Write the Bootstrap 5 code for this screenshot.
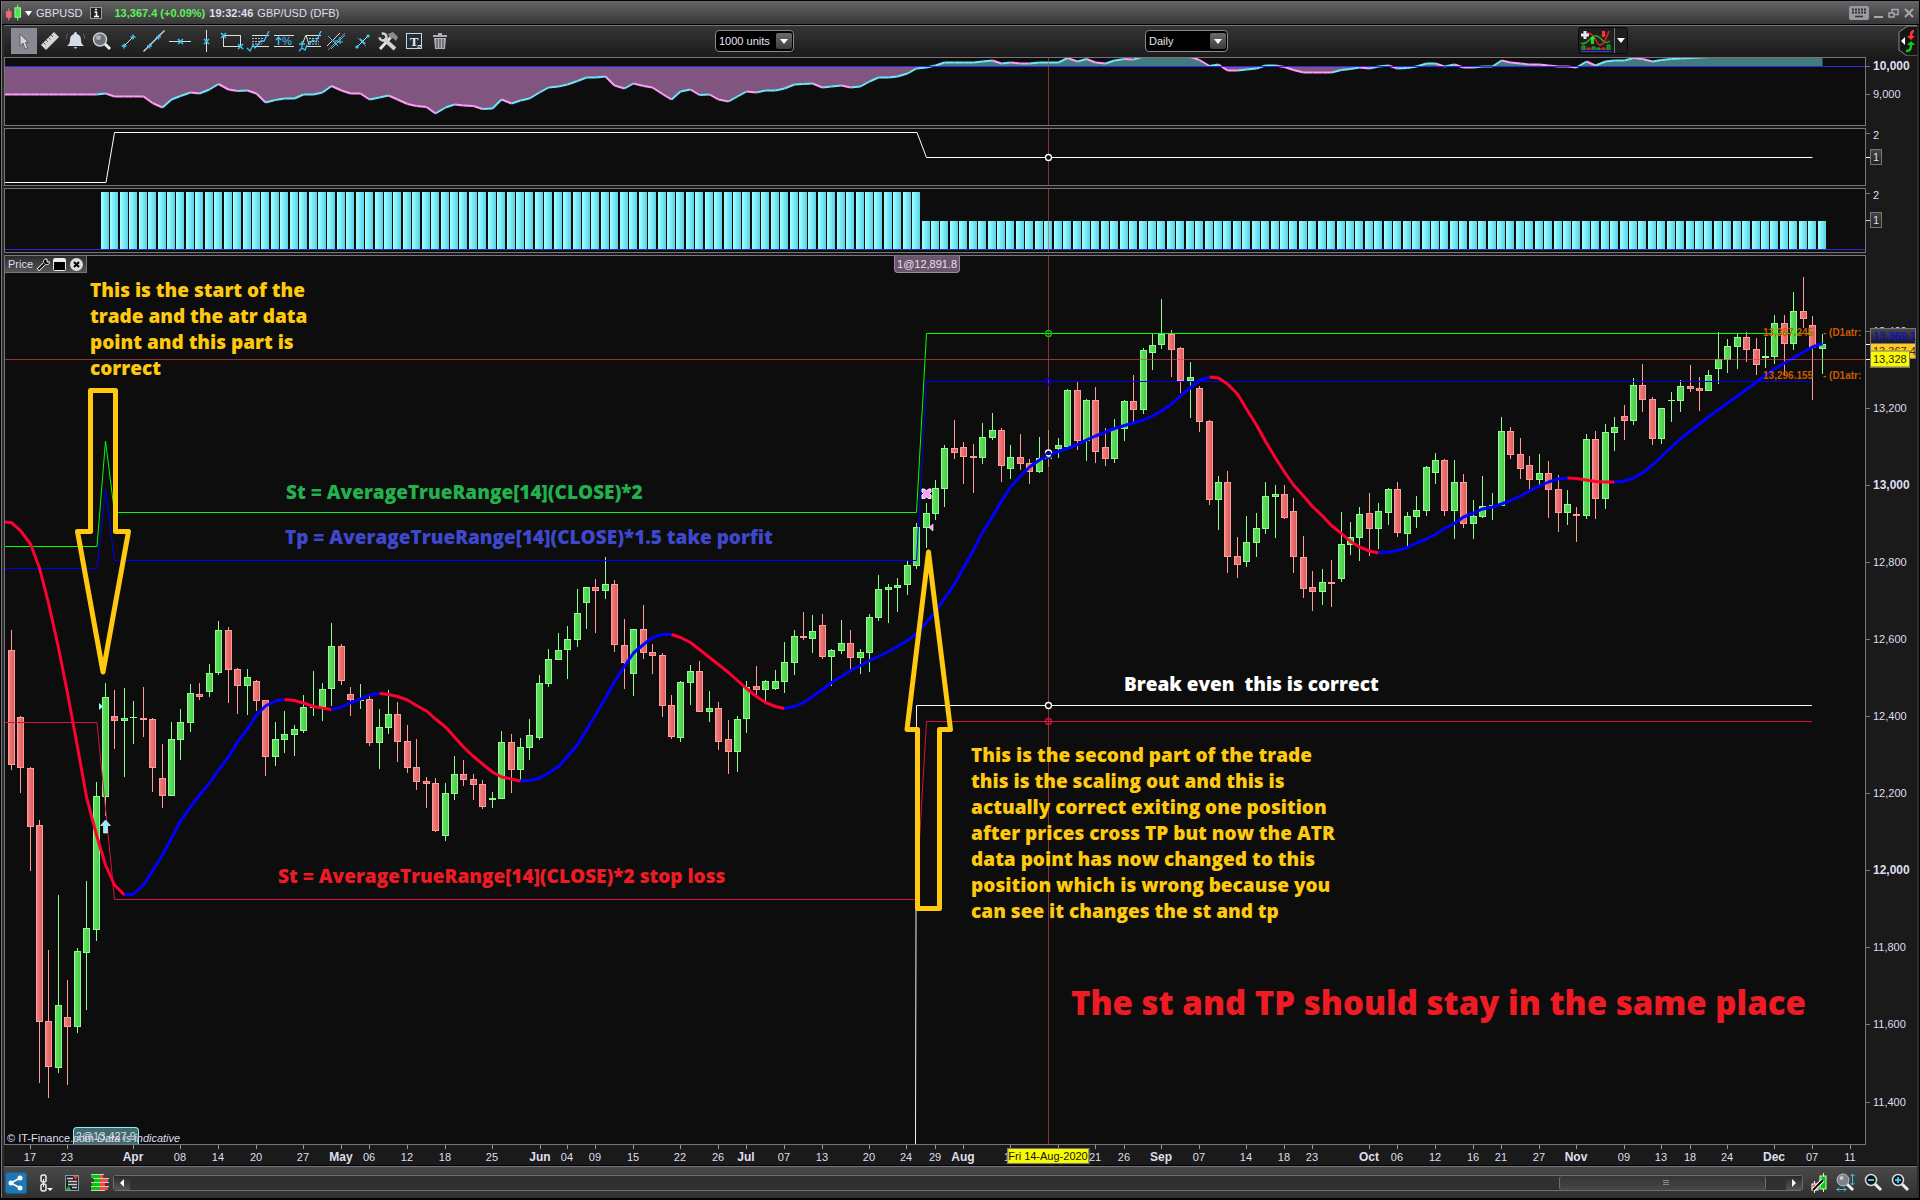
<!DOCTYPE html>
<html lang="en">
<head>
<meta charset="utf-8">
<meta name="viewport" content="width=device-width, initial-scale=1">
<title>GBPUSD</title>
<link href="https://cdn.jsdelivr.net/npm/bootstrap@5.3.0/dist/css/bootstrap.min.css" rel="stylesheet">
<script src="https://cdn.jsdelivr.net/npm/bootstrap@5.3.0/dist/js/bootstrap.bundle.min.js"></script>
<style>
:root{--line:#77757b;--txt:#dfdfee;--plot:#0d0d0d;--chrome:#1a1a1a;--note:#fec90e}
body{background:#000;color:var(--txt);font-family:"Liberation Sans",Arial,sans-serif;font-size:11px;line-height:14px;overflow:hidden}
svg{display:block}
.frame{border-left:1px solid var(--line);background:#2d2d2d;margin:1px 1px 2px}
.titlebar{height:24px;border-top:1px solid #6a686e;border-bottom:1px solid #000;background:linear-gradient(#636363,#373737)}
.titlebar button,.tool,.flat{background:none;border:0;padding:0;color:inherit}
.up{color:#5cf25c}
.body-area{margin:0 2px;border-top:1px solid var(--line);background:var(--chrome)}
.toolbar{height:31px;padding:0 0 2px 7px;background:linear-gradient(#353535,#1b1b1b)}
.tool{width:26px;height:26px}
.tool.on{background:#8a8890}
.grow-a{flex:262 1 0}.grow-b{flex:351 1 0}.grow-c{flex:350 1 0}.grow-d{flex:270 1 0}
.pick{position:relative;width:79px;height:22px}
.pick-wide{width:83px}
.pick select{appearance:none;width:100%;height:100%;background:#000;color:#e4e4f2;border:1px solid #8a8890;border-radius:4px;padding:0 18px 0 3px;font-size:11px}
.pick i{position:absolute;right:2px;top:3px;width:16px;height:16px;border-radius:2px;background:linear-gradient(#6a6a6a,#3c3c3c);pointer-events:none}
.pick i::after{content:"";position:absolute;left:4px;top:6px;border:4px solid transparent;border-top:5px solid #fff;border-bottom:0}
.indic{height:27px;border:1px solid #0a0a0a;border-radius:3px;background:#1e1e1e}
.panel-row{margin-bottom:2px}
.plot{position:relative;border:1px solid var(--line);background:var(--plot);overflow:hidden;min-width:0}
.plot>svg{position:absolute;left:0;top:0;width:100%;height:100%}
.axis{position:relative;width:51px;flex:none}
.h-a{height:69px}.h-b{height:58px}.h-c{height:65px}
.axis span,.axis b{position:absolute;left:7px;transform:translateY(-50%);white-space:nowrap}
.axis b{font-size:12px}
.axis em{position:absolute;left:0;width:4px;height:1px;background:var(--line)}
.axis em.lit{background:#fff}.axis em.aqua{background:#7ff0ff}
.axis .chip{left:4px;border:1px solid #77757b;padding:0 2px;background:linear-gradient(#444,#222)}
.axis .chip-blue{color:#0000f5;width:46px;height:16px;background:linear-gradient(#484848,#1c1c1c)}
.axis .chip-gold{color:#3c3200;width:46px;height:16px;background:#ffc926}
.axis .chip-yel{color:#222;background:#fafa00;height:17px}
.times{position:relative;height:21px;margin-right:51px}
.times span,.times b{position:absolute;top:5px;transform:translateX(-50%);white-space:nowrap}
.times b{font-size:12px}
.times em{position:absolute;top:0;width:1px;height:4px;background:#9a98a0}
.times .today{top:3px;color:#111;background:#fafa00;border:1px solid #77757b}
.note-text{position:absolute;margin:0;font-family:"Open Sans",sans-serif;font-weight:800;font-size:19px;line-height:26px;color:var(--note);white-space:pre}
.n1{left:4.57%;top:2.36%}
.n2{left:15.11%;top:25.1%;color:#22b14c}
.n3{left:15.05%;top:30.2%;color:#3f48cc}
.n4{left:14.68%;top:68.36%;color:#ed1c24}
.n5{left:60.16%;top:46.73%;color:#fff}
.n6{left:51.94%;top:54.73%}
.n7{left:57.31%;top:81.7%;color:#ed1c24;font-size:33px;line-height:44px}
.lvl{position:absolute;font-weight:700;font-size:10px;color:#c85a00;line-height:12px;white-space:nowrap}
.lvl-x{left:94.52%}.lvl-d{left:97.74%}
.lvl-1{top:8%}.lvl-2{top:12.8%}
.tag-top{position:absolute;left:47.8%;top:0;width:66px;height:17px;line-height:16px;text-align:center;background:#6b556b;border:1px solid #a284a6;border-top:0;border-radius:0 0 4px 4px;color:#e8e0f0}
.tag-bot{position:absolute;left:3.65%;bottom:0;width:66px;height:17px;text-align:center;background:#456a6d;border:1px solid #7ff0ff;border-bottom:0;border-radius:4px 4px 0 0;line-height:17px;color:#cfdbe8}
.credit{position:absolute;left:2px;bottom:-1px}
.panel-tab{position:absolute;left:0;top:0;height:17px;width:82px;padding:0 3px;border:solid #77757b;border-width:0 1px 1px 0;background:linear-gradient(#2c2c2c,#555)}
.statusbar{height:32px;margin:0 2px;padding:0 7px 0 1px;border-top:1px solid var(--line);background:linear-gradient(#484848,#303030);box-shadow:0 -1px 0 #000}
.share{width:22px;height:22px;border-radius:3px;background:#1d78b4;border:1px solid #16619a;padding:0}
.track{height:16px;border:1px solid #6e6c72;background:#303030;border-radius:3px}
.track button{width:16px;border:0;padding:0;background:linear-gradient(#2a2a2a,#555)}
.thumb{position:absolute;left:86.3%;width:12.5%;top:0;bottom:0;border:1px solid #6e6c72;border-width:0 1px;border-radius:3px;background:linear-gradient(#353535,#474747)}
.thumb::after{content:"";position:absolute;left:50%;top:4px;width:6px;height:6px;background:repeating-linear-gradient(#8a8890 0 1px,transparent 1px 2px)}
</style>
</head>
<body>
<div class="vh-100 d-flex flex-column">
<div class="frame flex-fill d-flex flex-column">

<header class="titlebar d-flex align-items-center pe-1">
  <svg class="ms-1" width="15" height="18" viewBox="0 0 16 18"><path d="M3 4v13" stroke="#ff8a8a"/><path d="M12.500 0v17" stroke="#8f8"/><rect x="0" y="7" width="6" height="7" fill="#f06a6a"/><rect x="9.500" y="3.500" width="6" height="10" fill="#4ee04e" stroke="#9f9"/></svg>
  <button class="ms-1" aria-label="Symbol list"><svg width="7" height="5"><path d="M0 0h7L3.500 5z" fill="#fff"/></svg></button>
  <span class="ms-1">GBPUSD</span>
  <button class="ms-2" aria-label="Information"><svg width="12" height="12"><rect x=".5" y=".5" width="11" height="11" fill="#222" stroke="#99a"/><path d="M4.500 5h2v4M4 9.500h5M5 2.500h2" stroke="#fff" stroke-width="1.500" fill="none"/></svg></button>
  <b class="up ms-2 ps-1">13,367.4 (+0.09%)</b>
  <b class="ms-1">19:32:46</b>
  <span class="ms-1">GBP/USD (DFB)</span>
  <button class="ms-auto" aria-label="Keyboard"><svg width="20" height="14"><rect width="20" height="14" rx="2" fill="#9a98a2"/><path d="M3 3.500h14M3 6.500h14" stroke="#333" stroke-width="2" stroke-dasharray="2 1"/><path d="M6 10.500h8" stroke="#333" stroke-width="1.500"/></svg></button>
  <button class="ms-1" aria-label="Minimise"><svg width="11" height="12"><path d="M1 10h9" stroke="#a9a7b2" stroke-width="2"/></svg></button>
  <button class="ms-1" aria-label="Restore"><svg width="11" height="11" fill="none" stroke="#a9a7b2" stroke-width="1.500"><path d="M4 4V1.500h6v5H7"/><rect x="1" y="5" width="5" height="4"/></svg></button>
  <button class="ms-1" aria-label="Close"><svg width="12" height="12"><path d="M2 2l8 8M10 2l-8 8" stroke="#a9a7b2" stroke-width="2"/></svg></button>
</header>

<main class="body-area flex-fill d-flex flex-column">
  <div class="toolbar d-flex align-items-center">
    <div class="d-flex" id="tools">
      <button class="tool on" aria-label="Select"><svg width="26" height="26"><path d="M9 6v12l3-3 2 6 2.500-1-2-5.500h3z" fill="#d4d4d8" stroke="#444" stroke-width=".7"/></svg></button>
      <button class="tool" aria-label="Ruler"><svg width="26" height="26"><path d="M4 17L17 4l5 5L9 22z" fill="#d6d6da"/><path d="M6.500 14.500l2 2M9 12l2 2M11.500 9.500l2 2M14 7l2 2" stroke="#555"/></svg></button>
      <button class="tool" aria-label="Alert"><svg width="26" height="26"><path d="M12.500 4c1 0 1.500 1 1.500 2 3 1 4 3 4 6 0 3 1 4 3 6H4c2-2 3-3 3-6s1-5 4-6c0-1 .5-2 1.500-2z" fill="#d4dde6"/><path d="M10.500 19h4l-2 2z" fill="#a8c4d8"/><path d="M5 6c-1.500 1-2 3-1.500 5M20 6c1.500 1 2 3 1.500 5" stroke="#7f96a8" stroke-dasharray="1 1" fill="none"/></svg></button>
      <button class="tool" aria-label="Zoom"><svg width="26" height="26"><path d="M15 15l6 6" stroke="#eee" stroke-width="3"/><circle cx="11" cy="11.500" r="6.500" fill="#6d7277" stroke="#c9ccd0" stroke-width="1.500"/><circle cx="9.500" cy="9.500" r="2.500" fill="#aab0b6"/></svg></button>
      <button class="tool" aria-label="Segment"><svg width="26" height="26" fill="none"><path d="M9 18l9-9" stroke="#ddd"/><path d="M9 15.500v5M6.500 18h5M18 6.500v5M15.500 9h5" stroke="#3bc4f5" stroke-width="1.500"/></svg></button>
      <button class="tool" aria-label="Line"><svg width="26" height="26" fill="none"><path d="M2.500 23.500l21-21" stroke="#ddd" stroke-width="1.300"/><path d="M8.500 15.500v5M6 18h5M17.500 6.500v5M15 9h5" stroke="#3bc4f5" stroke-width="1.300"/></svg></button>
      <button class="tool" aria-label="Horizontal line"><svg width="26" height="26" fill="none"><path d="M2 13.500h22" stroke="#ddd"/><path d="M11 11l5 5M16 11l-5 5" stroke="#3bc4f5" stroke-width="1.500"/></svg></button>
      <button class="tool" aria-label="Vertical line"><svg width="26" height="26" fill="none"><path d="M13.500 2v22" stroke="#ddd"/><path d="M11 11l5 5M16 11l-5 5" stroke="#3bc4f5" stroke-width="1.500"/></svg></button>
      <button class="tool" aria-label="Rectangle"><svg width="26" height="26" fill="none"><rect x="4.500" y="7.500" width="17" height="11" stroke="#ddd"/><path d="M2 5l5 5M7 5l-5 5M19 16l5 5M24 16l-5 5" stroke="#3bc4f5" stroke-width="1.500"/></svg></button>
      <button class="tool" aria-label="Fibonacci"><svg width="26" height="26" fill="none"><path d="M7 7.500h17M7 18.500h17" stroke="#ddd"/><path d="M7 10.500h12M7 13.500h12M7 16h10" stroke="#bbb" stroke-dasharray="2 1"/><path d="M2 20l3 3 3-6 2 3 6-7 3 0 5-10" stroke="#3bc4f5" stroke-width="1.300"/></svg></button>
      <button class="tool" aria-label="Percentage"><svg width="26" height="26" fill="none"><path d="M3 7.500h20M3 18.500h20" stroke="#ddd"/><path d="M7.500 17V9M5 12l2.500-3 2.500 3" stroke="#3bc4f5" stroke-width="1.300"/><text x="11" y="17" font-size="11" fill="#3bc4f5">%</text></svg></button>
      <button class="tool" aria-label="Fibonacci fan"><svg width="26" height="26" fill="none"><path d="M9 7.500h15M9 18.500h15M5 17l4-10 3 10" stroke="#ddd"/><path d="M12 10.500h10M12 13.500h10M12 16h10" stroke="#bbb" stroke-dasharray="2 1"/><path d="M5 13v7M2 16h6M2 23l3-3 3 2 2-5M11 17l5-5 3 2 5-11" stroke="#3bc4f5" stroke-width="1.300"/></svg></button>
      <button class="tool" aria-label="Channel"><svg width="26" height="26" fill="none"><path d="M4 18L17 5" stroke="#ddd"/><path d="M8 21L22 7M5 8l10 10" stroke="#3bc4f5"/><path d="M5 22L22 5" stroke="#888"/><path d="M10 13h5M17 9v7M14 14h6" stroke="#3bc4f5"/></svg></button>
      <button class="tool" aria-label="Link points"><svg width="26" height="26" fill="none"><path d="M9 18l10-10" stroke="#ddd"/><path d="M9 10l8 8" stroke="#3bc4f5" stroke-dasharray="2 1"/><path d="M7 18h2v2H7zM18 7h2v2h-2z" fill="#3bc4f5" stroke="#3bc4f5"/><path d="M11 11l5 5" stroke="#3bc4f5" stroke-width="2"/></svg></button>
      <button class="tool" aria-label="Settings"><svg width="26" height="26" fill="none"><path d="M5 21L16 9" stroke="#e4e4e4" stroke-width="3"/><path d="M13 6l5-2 5 5-2 4-3-3-2 1z" fill="#8a8d90"/><path d="M9 11l11 10" stroke="#cfd2d5" stroke-width="4"/><circle cx="8" cy="9" r="3.500" stroke="#cfd2d5" stroke-width="2.500" stroke-dasharray="17 5" transform="rotate(-110 8 9)"/></svg></button>
      <button class="tool" aria-label="Text"><svg width="26" height="26"><rect x="5.500" y="5.500" width="15" height="15" fill="#222e38" stroke="#cdd5dc"/><text x="13" y="18" text-anchor="middle" font-family="Liberation Serif" font-weight="700" font-size="13" fill="#e8edf2">T</text><path d="M17 20.500v-3h3.500z" fill="#111" stroke="#cdd5dc"/></svg></button>
      <button class="tool" aria-label="Delete"><svg width="26" height="26"><path d="M6 7h14v2H6zM11 5h4v2h-4zM7 10h12l-1 11H8z" fill="#aeb2b6"/><path d="M10 11v9M13 11v9M16 11v9" stroke="#555" stroke-width="1.300"/></svg></button>
    </div>
    <div class="grow-a"></div>
    <div class="pick"><select aria-label="Units"><option>1000 units</option></select><i></i></div>
    <div class="grow-b"></div>
    <div class="pick pick-wide"><select aria-label="Timeframe"><option>Daily</option></select><i></i></div>
    <div class="grow-c"></div>
    <div class="indic d-flex align-items-center">
      <button class="flat" aria-label="Indicators"><svg width="35" height="25" fill="none"><path d="M2 15c6 4 10-9 16-7s6 10 13 5" stroke="#1fae2c" stroke-width="1.500"/><path d="M3 8l6-3c8 1 8 12 12 12s6-6 9-14" stroke="#d22" stroke-width="1.500"/><path d="M6 3v8M2 7h8" stroke="#e6e6f0" stroke-width="3"/><path d="M11 11h5l-2.500-3z" fill="#2f2"/><path d="M13.500 11v5" stroke="#1d1" stroke-width="3"/><path d="M24.500 3v5" stroke="#f33" stroke-width="3"/><path d="M22 7h5l-2.500 3z" fill="#f33"/><path d="M3 22v-4h3v4M13 22v-3h3v3M18 22v-2h3v2M28 22v-5h3v5" fill="#187a20" stroke="#2a2"/><path d="M8 22v-2h3v2M23 22v-2h3v2" fill="#a22" stroke="#d33"/><path d="M2 23.500h30" stroke="#33f"/></svg></button>
      <button class="flat border-start border-secondary h-100" aria-label="Indicator menu"><svg width="12" height="6"><path d="M2 0h8L6 5z" fill="#fff"/></svg></button>
    </div>
    <div class="grow-d"></div>
    <button class="flat" aria-label="Expand side panel"><svg width="19" height="31" fill="none"><path d="M19 1H10L1 7v18l8 6h10" stroke="#8a8890" fill="#151515"/><path d="M7 12v8l-4-4z" fill="#fff"/><path d="M16 6c-3 0-3 3-3 7" stroke="#f33" stroke-width="2.500"/><path d="M9 11h8l-4 4z" fill="#f33"/><path d="M8 26c5 0 5-3 5-7" stroke="#1c1" stroke-width="2.500"/><path d="M9 20h8l-4-4z" fill="#1c1"/></svg></button>
  </div>

  <div class="panel-row h-a d-flex">
    <div class="plot flex-fill"><svg id="equity" viewBox="5 58 1860 67" preserveAspectRatio="none"></svg></div>
    <div class="axis" data-top="57" data-h="69"></div>
  </div>
  <div class="panel-row h-b d-flex">
    <div class="plot flex-fill"><svg id="position" viewBox="5 129 1860 56" preserveAspectRatio="none"></svg></div>
    <div class="axis" data-top="128" data-h="58"></div>
  </div>
  <div class="panel-row h-c d-flex">
    <div class="plot flex-fill"><svg id="lots" viewBox="5 189 1860 63" preserveAspectRatio="none"></svg></div>
    <div class="axis" data-top="188" data-h="65"></div>
  </div>
  <div class="flex-fill d-flex">
    <div class="plot flex-fill">
      <svg id="price" viewBox="5 256 1860 888" preserveAspectRatio="none"></svg>
      <div class="panel-tab d-flex align-items-center justify-content-between">
        <span>Price</span>
        <button class="flat" aria-label="Configure"><svg width="13" height="13" fill="none"><path d="M1 12l6-6" stroke="#fff" stroke-width="3.500"/><path d="M8 1c-2 1-2 4 0 5s4 1 5-2l-3 0V1z" fill="#000" stroke="#fff"/><path d="M1.500 11.500l6-6" stroke="#000" stroke-width="1.800"/></svg></button>
        <button class="flat" aria-label="Maximise"><svg width="13" height="13"><rect x=".5" y=".5" width="12" height="12" rx="1" fill="#000" stroke="#eee"/><path d="M1 2.500h11" stroke="#eee" stroke-width="3"/></svg></button>
        <button class="flat" aria-label="Close panel"><svg width="13" height="13"><circle cx="6.500" cy="6.500" r="6.500" fill="#ddd"/><path d="M4 4l5 5M9 4l-5 5" stroke="#000" stroke-width="2"/></svg></button>
      </div>
      <div class="tag-top">1@12,891.8</div>
      <div class="tag-bot">2@13,427.9</div>
      <div class="credit">© IT-Finance.com <i>Data is indicative</i></div>
      <div class="lvl lvl-x lvl-1">13,387.245</div><div class="lvl lvl-d lvl-1">- (D1atr:</div>
      <div class="lvl lvl-x lvl-2">13,296.155</div><div class="lvl lvl-d lvl-2">- (D1atr:</div>
      <p class="note-text n1">This is the start of the
trade and the atr data
point and this part is
correct</p>
      <p class="note-text n2">St = AverageTrueRange[14](CLOSE)*2</p>
      <p class="note-text n3">Tp = AverageTrueRange[14](CLOSE)*1.5 take porfit</p>
      <p class="note-text n4">St = AverageTrueRange[14](CLOSE)*2 stop loss</p>
      <p class="note-text n5">Break even  this is correct</p>
      <p class="note-text n6">This is the second part of the trade
this is the scaling out and this is
actually correct exiting one position
after prices cross TP but now the ATR
data point has now changed to this
position which is wrong because you
can see it changes the st and tp</p>
      <p class="note-text n7">The st and TP should stay in the same place</p>
    </div>
    <div class="axis" data-top="255" data-h="890"></div>
  </div>
  <div class="times" id="times"></div>
</main>

<footer class="statusbar d-flex align-items-center">
  <button class="share" aria-label="Share"><svg width="20" height="20"><path d="M5 10l9-5M5 10l9 5" stroke="#fff" stroke-width="1.500"/><circle cx="5" cy="10" r="2.500" fill="#fff"/><circle cx="14" cy="5" r="2.500" fill="#fff"/><circle cx="14" cy="15" r="2.500" fill="#fff"/></svg></button>
  <button class="flat ms-2 ps-1" aria-label="Link"><svg width="14" height="18" fill="none"><rect x="2" y="1" width="5" height="7" rx="2" stroke="#eee" stroke-width="1.500"/><rect x="2" y="10" width="5" height="7" rx="2" stroke="#eee" stroke-width="1.500"/><path d="M4.500 5v8" stroke="#eee"/><path d="M8 14h6l-3 3z" fill="#fff"/></svg></button>
  <button class="flat ms-2 ps-1" aria-label="Orders"><svg width="14" height="16"><rect x=".5" y=".5" width="13" height="15" fill="#222" stroke="#8899a6"/><path d="M2 3.500h6M3 6.500h9M3 9.500h9M7 12.500h5" stroke="#ccd" stroke-width="1.300"/><path d="M8 1h5l-2.500 4z" fill="#f33"/><path d="M1 15h5l-2.500-4z" fill="#1c1"/></svg></button>
  <button class="flat ms-2 ps-1" aria-label="Order book"><svg width="18" height="17"><path d="M0 2.500h9M3 6.500h6M1 10.500h8M0 14.500h9" stroke="#0c0" stroke-width="3"/><path d="M9 2.500h3M9 6.500h8M9 10.500h5M9 14.500h8" stroke="#f44" stroke-width="3"/><path d="M0 .5h13M2 4.500h16M0 8.500h18M0 12.500h18M0 16.500h14" stroke="#ccc"/></svg></button>
  <div class="track flex-fill d-flex ms-1">
    <button aria-label="Scroll left"><svg width="16" height="10"><path d="M10 1v8L6 5z" fill="#fff"/></svg></button>
    <div class="flex-fill position-relative"><div class="thumb"></div></div>
    <button aria-label="Scroll right"><svg width="14" height="10"><path d="M6 1v8l4-4z" fill="#fff"/></svg></button>
  </div>
  <button class="flat ms-2" aria-label="Chart settings"><svg width="16" height="20"><path d="M12.500 0v19M3.500 8v12" stroke="#eee"/><rect x="9" y="3" width="6" height="13" fill="#0c0" stroke="#cfc"/><rect x="1" y="11" width="6" height="6" fill="#d33" stroke="#fff"/><path d="M2 17L12 7" stroke="#fff" stroke-width="4"/><path d="M2 17L12 7" stroke="#000" stroke-width="2"/></svg></button>
  <button class="flat ms-2" aria-label="Fit"><svg width="21" height="20" fill="none"><path d="M12 11l6 6" stroke="#eee" stroke-width="3"/><circle cx="8" cy="7" r="6" fill="#7d8388" stroke="#b9bec2"/><circle cx="6.500" cy="5" r="2" fill="#c4cacf"/><path d="M17.500 1v11M15.500 3l2-2 2 2M15.500 10l2 2 2-2M2 16.500h9M4 14.500l-2 2 2 2M9 14.500l2 2-2 2" stroke="#3bc4f5"/></svg></button>
  <button class="flat ms-2" aria-label="Zoom out"><svg width="19" height="19"><path d="M11 11l6 6" stroke="#eee" stroke-width="3"/><circle cx="7" cy="7" r="5.500" fill="#111" stroke="#ddd" stroke-width="1.500"/><path d="M4 7h6" stroke="#3bc4f5" stroke-width="2"/></svg></button>
  <button class="flat ms-2" aria-label="Zoom in"><svg width="19" height="19"><path d="M11 11l6 6" stroke="#eee" stroke-width="3"/><circle cx="7" cy="7" r="5.500" fill="#111" stroke="#ddd" stroke-width="1.500"/><path d="M4 7h6M7 4v6" stroke="#3bc4f5" stroke-width="2"/></svg></button>
</footer>
</div>
</div>

<script>
// One session: high, body top, body bottom, low; a leading "-" marks a falling session
const sessions = `-630 650 765 770,-716 717 768 793,-767 768 827 871,-820 825 1022 1083,-950 1021 1067 1098,895 1005 1068 1073,-980 1017 1027 1085,948 951 1027 1033,881 928 953 1010,782 796 930 941,683 697 797 816,-690 716 721 749,688 718 721 777,701 717 718 744,-687 718 720 737,-718 719 768 792,-744 778 796 808,722 739 796 796,709 722 740 760,684 693 723 732,-683 694 697 700,664 673 692 697,621 630 673 675,-627 630 670 703,-668 669 686 714,669 677 686 715,-680 681 701 711,-700 700 757 776,722 739 757 766,711 734 740 753,725 729 735 756,695 707 731 733,671 707 708 716,683 689 707 721,623 646 689 706,-644 646 681 685,-687 694 700 716,684 700 701 709,-695 699 743 746,709 727 743 769,690 714 728 734,-702 714 742 762,-725 741 768 773,-739 767 782 790,-777 781 784 808,-778 783 831 832,783 793 836 841,756 774 794 800,-760 774 780 786,-774 779 785 800,-780 784 807 809,792 798 800 808,731 742 799 799,-734 742 770 793,738 747 770 780,719 735 748 760,675 683 738 740,649 659 684 687,633 650 660 660,626 639 650 679,589 613 640 647,587 587 603 629,-579 587 591 633,557 584 591 599,-580 584 645 652,-619 645 663 689,629 629 674 696,-605 629 653 659,-644 652 656 674,-653 655 706 717,-695 705 737 739,681 682 738 742,665 671 683 705,-661 671 712 712,691 708 712 722,-702 708 742 750,-720 739 752 774,716 719 752 772,681 687 719 733,-666 686 690 697,680 681 690 702,670 681 689 690,642 662 682 693,630 636 663 675,-612 636 638 640,615 631 639 653,-614 625 657 659,649 650 657 686,620 643 651 654,-630 643 658 669,649 652 658 674,614 617 653 672,575 589 618 621,584 587 590 623,578 585 588 612,561 565 585 595,523 527 566 569,503 513 528 548,480 488 514 520,445 448 489 507,-420 448 453 459,-442 447 457 484,-444 456 458 493,423 437 458 464,413 430 438 440,-428 430 466 482,445 457 469 479,-434 457 464 470,-459 463 472 484,437 458 472 473,430 452 459 467,438 445 449 458,389 390 447 447,-382 390 441 450,399 400 441 461,-387 400 452 463,-428 447 459 466,419 428 459 463,400 401 429 441,-375 401 410 423,348 350 410 414,334 345 353 370,299 334 345 349,-330 334 350 377,-347 348 381 393,362 377 381 418,-386 388 422 432,-420 421 500 505,476 482 500 530,-471 482 557 573,-537 556 565 578,516 542 562 567,513 528 543 557,482 496 529 534,485 494 497 538,-485 494 518 519,-498 511 557 573,-536 557 589 598,-571 587 592 611,569 582 592 605,-560 582 584 607,512 544 579 582,522 537 545 555,507 514 538 561,-493 513 529 556,503 511 529 549,488 489 513 525,-482 489 533 537,512 516 534 546,496 510 517 528,466 467 511 516,453 460 473 484,-459 460 511 516,460 482 511 539,-474 482 524 528,500 516 524 539,476 506 517 518,493 505 506 520,417 431 506 506,-427 431 455 459,-438 454 469 479,-456 465 480 489,454 473 480 485,-461 473 490 518,-475 489 513 532,490 504 513 525,-507 514 516 542,434 439 516 519,-431 439 499 519,424 432 499 509,417 427 433 451,-405 416 421 440,378 385 421 425,-364 385 400 412,-397 399 439 445,408 408 439 444,392 400 401 422,380 386 401 412,-365 386 389 392,-377 388 391 411,370 375 391 391,332 359 369 384,339 346 360 373,334 337 347 369,-332 337 350 362,-338 349 365 375,337 356 358 368,315 323 357 364,-315 323 344 375,292 311 344 350,-277 311 319 328,-316 325 348 400,334 344 349 374`.split(',').map(s=>{const down=s[0]==='-';return{down,v:s.replace('-','').split(' ').map(Number)}});
const average=[522.7,530.7,544,568,603,648,693,747,797,835,865,885,895,894,885,871,855,838,821,807,795,783,770,757,742,729,715,706,701,699.5,700.5,703,706.5,708,709.5,707,703,699,695,693.5,694.5,696.5,700,705.5,711,719,727,737,747,756.5,764,772,777,779,781,780.5,778,773,766.5,756.5,744.5,730,715,698,681.5,666,653,644.5,637.5,634.5,634.5,637.5,642.5,649.5,657.5,664.5,672.5,680.5,688.5,696.5,702.5,706.5,708.5,706.5,702.5,696.5,689.5,682.5,676.5,670.5,665.5,660.5,656.5,651.5,646.5,640.5,633.5,622.5,611.5,598.5,584,568,550,532.5,516.5,501,487,476,467,460,455,451.5,448.5,444.5,440,436,432,428.5,425.5,423,420,416,411,404,396,387.5,380.5,377,378,384,394,409,425,441.5,458,472,485,496,506.5,516,525.5,533.5,541.5,547,551,553,552,550.5,547.5,543,539,534.5,528.5,523.5,517,513,509,507,504,500.5,496,491,486,482,479,478,478.5,480,481.5,482,482,481,478,473,465,456.5,447,439,431,424,417,409.5,403,396,389.5,382,375,369,363,358,352,347,343.5];
const turns=[[0,'r'],[12,'b'],[29,'r'],[34,'b'],[39,'r'],[54,'b'],[70,'r'],[82,'b'],[127,'r'],[145,'b'],[165,'r'],[170,'b'],[192,'']];
const equity=[94.5,94.5,94.5,94.5,94.5,94.5,94.5,94.5,94.5,94.5,93.5,96.5,96.5,96.5,96.5,103,107.5,99.5,96,92.5,93.5,89.5,84,89.5,91,90.5,93.5,102.5,100,98.5,98.5,94.5,94.5,92.5,86,90.5,93.5,93.5,99.5,97.5,95.5,99.5,104,106,107,113.5,107.5,104.5,105.5,106,109,108.5,99.5,103.5,100.5,98.5,92.5,87.5,86.5,84.5,81,77.5,77.5,76.5,85.5,88.5,83.5,86,87.5,94,99.5,91.5,89.5,95,94.5,99.5,101.5,96.5,91.5,92.5,90.5,90.5,88.5,84.5,84,83.5,87.5,86.5,85.5,87.5,86.5,81.5,77.5,77.5,76.5,73.5,68.5,67.5,65.5,62.5,62.5,62.5,62.5,61.5,60.5,63.5,62.5,63.5,63.5,62.5,62.5,62.5,58,61.5,59,62.5,63.5,60.5,59,59.5,56.5,56,55,56,57,57,60,66,64.5,70.5,70.5,69.5,68.5,65.5,65.5,67,70,72.5,72.5,72.5,72.5,70,69,67.5,68.5,66.5,65.5,68.5,68,66.5,63.5,63.5,66.5,64.5,67.5,67.5,66.5,66.5,60.5,62.5,63.5,64.5,64.5,65.5,66.5,66.5,67.5,61.5,65.5,61.5,60.5,60.5,58,59,61.5,60,59,58.5,58,57.5,57,56,55,55,54,54,54,54,54,54,54,54,54];
const X=i=>11.5+Math.floor(9.432*i+.2);
const el=id=>document.getElementById(id);
const crossV='<path d="M1048.5 0V1200" stroke="#e04646" stroke-opacity=".6"/>';
const ring=(y,c)=>`<circle cx="1048.5" cy="${y}" r="3" fill="${c==='#fff'?'#0d0d0d':'none'}" stroke="${c}" stroke-width="1.3"/>`;

// Equity panel
let poly='M5 66.5L5 94.5'+equity.map((y,i)=>`L${X(i)} ${y}`).join('')+'V66.5Z';
let segs='',last='#ff9dfa';
equity.forEach((y,i)=>{if(!i){segs+=`<path d="M5 ${y}H${X(0)}" stroke="${last}"/>`;return}
  const p=equity[i-1];last=y<p?'#6fe6f7':y>p?'#ff9dfa':last;segs+=`<path d="M${X(i-1)} ${p}L${X(i)} ${y}" stroke="${last}"/>`});
el('equity').innerHTML=`<defs><clipPath id="above"><path d="M0 0H1920V66.5H0z"/></clipPath><clipPath id="below"><path d="M0 66.5H1920V200H0z"/></clipPath></defs>
<path d="${poly}" fill="#427a80" clip-path="url(#above)"/><path d="${poly}" fill="#805680" clip-path="url(#below)"/>
<g stroke-width="2" fill="none">${segs}</g><path d="M5 66.5H1865" stroke="#2c2ce0"/>${crossV}`;

// Position panel
el('position').innerHTML=`<path d="M5 182.500H106L114.500 132.500H917L926.500 157.500H1812.500" fill="none" stroke="#fff"/>${crossV}${ring(157.5,'#fff')}`;

// Lots panel
let bars='';
for(let i=10;i<193;i++){const t=i<97?192:221;bars+=`<rect x="${X(i)-4.5}" y="${t}" width="8" height="${249-t}" fill="url(#aq)"/>`}
el('lots').innerHTML=`<defs><linearGradient id="aq"><stop stop-color="#a8ffff"/><stop offset=".3" stop-color="#86f6ff"/><stop offset="1" stop-color="#5ccfe2"/></linearGradient></defs>${bars}<path d="M5 249.500H1865" stroke="#2c2cd0"/>${crossV}`;

// Price panel
let candles='';
sessions.forEach((s,i)=>{const[h,t,b,l]=s.v,x=X(i),c=s.down?'#ff9c98':'#8dfc8b';
  candles+=`<path d="M${x} ${h}V${t}M${x} ${b}V${l}" stroke="${c}"/>`+
  (b-t<3?`<rect x="${x-3.5}" y="${t}" width="7" height="${Math.max(1,b-t)}" fill="${c}"/>`
        :`<rect x="${x-3}" y="${t+.5}" width="6" height="${b-t-1}" fill="url(#${s.down?'dn':'up'})" stroke="${c}"/>`)});
let ma='';
for(let k=0;k<turns.length-1;k++){let pts=k?'':'5,522 ';for(let i=turns[k][0];i<=turns[k+1][0];i++)pts+=`${X(i)},${average[i]} `;
  ma+=`<polyline points="${pts}" stroke="${turns[k][1]==='r'?'#ff0033':'#0000ff'}"/>`}
el('price').innerHTML=`<defs><linearGradient id="up"><stop stop-color="#62e562"/><stop offset="1" stop-color="#48c848"/></linearGradient><linearGradient id="dn"><stop stop-color="#f58080"/><stop offset="1" stop-color="#d95c5c"/></linearGradient></defs>
${candles}
<g fill="none">
<path d="M5 546.500H97L105.500 441L114.500 512.500H916.500L926.500 333.500H1812" stroke="#00ff00"/>
<path d="M5 568.500H97L105.500 489L114.500 560.500H916.500L926.500 381.500H1812" stroke="#0000f0"/>
<path d="M5 722.500H97L114.500 899.500H916L926.500 721.500H1812" stroke="#d8143c"/>
<path d="M915.500 1144L916.500 705.500H1812" stroke="#f4f4f4"/>
<g stroke-width="3" stroke-linejoin="round">${ma}</g>
<path d="M5 359.500H1865" stroke="#e04646" stroke-opacity=".65"/>${crossV}
${ring(333.5,'#00c800')}${ring(381.5,'#0000c8')}${ring(453,'#fff')}${ring(455.5,'#0000c8')}${ring(705.5,'#fff')}${ring(721.5,'#d8143c')}
</g>
<path d="M99 703v7l4-3.500z" fill="#9ff"/><path d="M105.500 820l5 5.500h-3V833h-4v-7.500h-3z" fill="#8ef0f8" stroke="#fff" stroke-width=".6"/>
<path d="M922 489l2.500 0 2 2 2-2H931v3l-1.500 1.500L931 495v3.500h-2.500l-2-1.500-2 1.500H922V495l1.500-1.500L922 492z" fill="#ff9dfa" stroke="#fff"/>
<path d="M933 524v7l-4-3.500z" fill="#ff9dfa" stroke="#fff" stroke-width=".6"/>
<g fill="none" stroke="#fec90e" stroke-width="5" stroke-linejoin="round">
<path d="M90.500 390.500H115.500V531.500H128.500L103 672L77.500 531.500H90.500Z"/>
<path d="M928.500 552L907 729.500H917.500V908.500H939.500V729.500H950.500Z"/></g>`;

// Value axes: y, label, kind
const axes=[[[66,'10,000','b'],[94,'9,000']],
 [[133,'2','','',135],[157,'1','chip','lit']],
 [[193,'2','','',195],[220,'1','chip','aqua']],
 [[331,'13,400'],[408,'13,200'],[485,'13,000','b'],[562,'12,800'],[639,'12,600'],[716,'12,400'],[793,'12,200'],[870,'12,000','b'],[947,'11,800'],[1024,'11,600'],[1102,'11,400'],
  [344,'13,369.1','chip chip-blue','lit',336],[344,'13,367.4','chip chip-gold','lit',351],[359,'13,328','chip chip-yel','lit',359]]];
document.querySelectorAll('.axis').forEach((a,n)=>{const pc=y=>((y-a.dataset.top)/a.dataset.h*100).toFixed(3)+'%';
 a.innerHTML=axes[n].map(([y,t,k='',tick='',ty=y])=>`<em class="${tick}" style="top:${pc(y)}"></em>`+(k==='b'?`<b style="top:${pc(ty)}">${t}</b>`:`<span class="${k}" style="top:${pc(ty)}">${t}</span>`)).join('')});

// Date axis; an entry without a label is a bare tick
const dates='30 17,67 23,133 Apr,180 08,218 14,256 20,303 27,341 May,369 06,407 12,445 18,492 25,540 Jun,567 04,595 09,633 15,680 22,718 26,746 Jul,784 07,822 13,869 20,906 24,935 29,963 Aug,1010 10,1058,1095 21,1124 26,1161 Sep,1199 07,1246 14,1284 18,1312 23,1369 Oct,1397 06,1435 12,1473 16,1501 21,1539 27,1576 Nov,1624 09,1661 13,1690 18,1727 24,1774 Dec,1812 07,1850 11';
const left=x=>((x-4)/1862*100).toFixed(3)+'%';
el('times').innerHTML=dates.split(',').map(d=>{const[x,t]=d.split(' '),g=isNaN(t)?'b':'span';return `<em style="left:${left(x)}"></em>`+(t?`<${g} style="left:${left(x)}">${t}</${g}>`:'')}).join('')+`<span class="today" style="left:${left(1048)}">Fri 14-Aug-2020</span>`;
</script>
</body>
</html>
